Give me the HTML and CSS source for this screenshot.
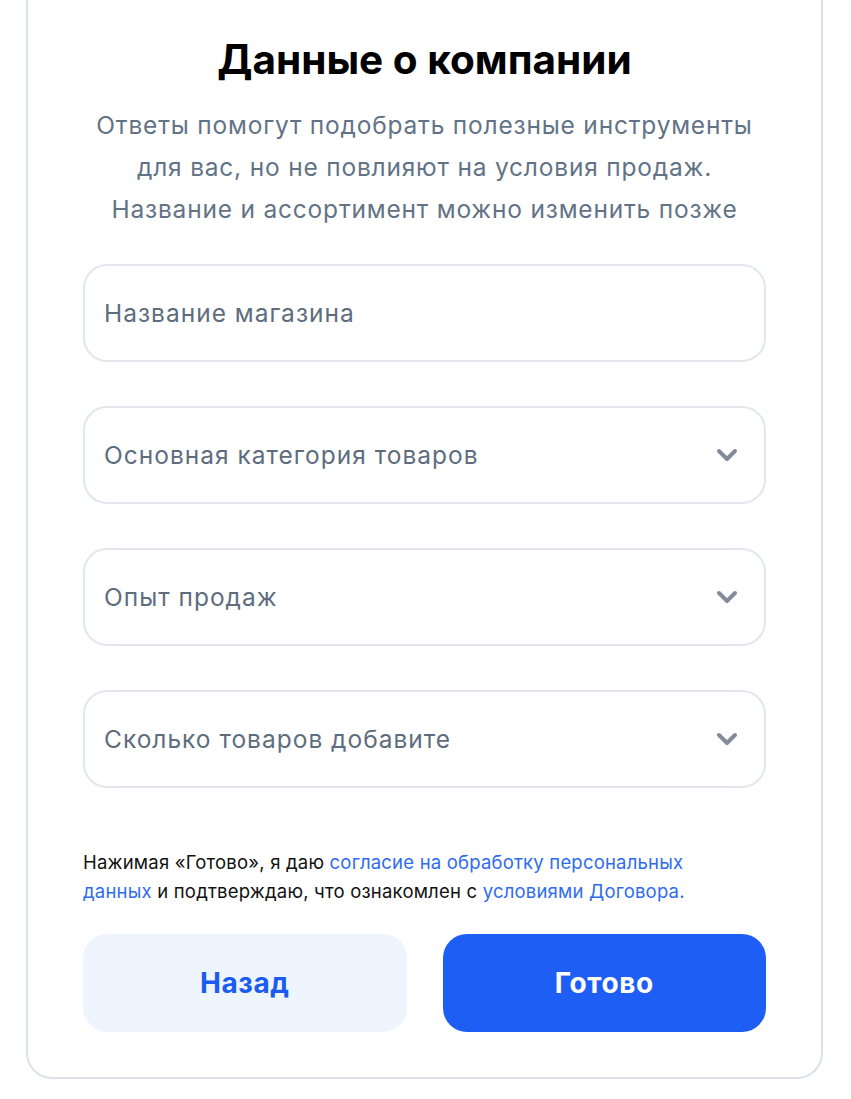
FILE: index.html
```html
<!DOCTYPE html>
<html lang="ru">
<head>
    <meta charset="UTF-8">
    <meta name="viewport" content="width=device-width, initial-scale=1.0">
    <title>Данные о компании</title>
    <link rel="stylesheet" href="styles.css">
</head>
<body>
    <div class="card">
        <h1 class="title">Данные о компании</h1>
        <p class="subtitle">Ответы помогут подобрать полезные инструменты<br>для вас, но не повлияют на условия продаж.<br>Название и ассортимент можно изменить позже</p>

        <div class="fields">
            <div class="field">
                <span class="placeholder">Название магазина</span>
            </div>
            <div class="field">
                <span class="placeholder">Основная категория товаров</span>
                <svg class="chevron" width="22" height="14" viewBox="0 0 22 14"><path d="M3 3l8 8 8-8" fill="none" stroke="#838b9b" stroke-width="4" stroke-linecap="round" stroke-linejoin="round"/></svg>
            </div>
            <div class="field">
                <span class="placeholder">Опыт продаж</span>
                <svg class="chevron" width="22" height="14" viewBox="0 0 22 14"><path d="M3 3l8 8 8-8" fill="none" stroke="#838b9b" stroke-width="4" stroke-linecap="round" stroke-linejoin="round"/></svg>
            </div>
            <div class="field">
                <span class="placeholder">Сколько товаров добавите</span>
                <svg class="chevron" width="22" height="14" viewBox="0 0 22 14"><path d="M3 3l8 8 8-8" fill="none" stroke="#838b9b" stroke-width="4" stroke-linecap="round" stroke-linejoin="round"/></svg>
            </div>
        </div>

        <p class="consent">Нажимая «Готово», я даю <a href="#">согласие на обработку персональных<br>данных</a> и подтверждаю, что ознакомлен с <a href="#">условиями Договора.</a></p>

        <div class="actions">
            <button class="btn btn-back">Назад</button>
            <button class="btn btn-done">Готово</button>
        </div>
    </div>
</body>
</html>
```

FILE: styles.css
```css
body {
    font-family: 'Inter', 'Noto Sans', sans-serif;
    margin: 0;
    background-color: white;
    padding: 0 28px 0 26px;
}
.card {
    border: 2px solid #dde1ea;
    border-top: none;
    border-radius: 0 0 26px 26px;
    padding: 36px 55px 45px;
    background-color: white;
}
.title {
    margin: 0;
    text-align: center;
    font-size: 40.5px;
    font-weight: 700;
    color: #000;
    line-height: 48px;
}
.subtitle {
    margin: 20px 0 0;
    text-align: center;
    font-size: 24.5px;
    letter-spacing: 0.8px;
    line-height: 42px;
    color: #637386;
}
.fields {
    display: flex;
    flex-direction: column;
    gap: 44px;
    margin-top: 34px;
}
.field {
    box-sizing: border-box;
    height: 98px;
    border: 2px solid #e2e6ed;
    border-radius: 24px;
    display: flex;
    align-items: center;
    justify-content: space-between;
    padding: 0 26px 0 19px;
}
.placeholder {
    font-size: 24.5px;
    letter-spacing: 1px;
    color: #5e6d7e;
}
.consent {
    margin: 60px 0 0;
    font-size: 18.5px;
    letter-spacing: 0.2px;
    line-height: 29px;
    color: #111;
}
.consent a {
    color: #2e6bf1;
    text-decoration: none;
}
.actions {
    display: flex;
    gap: 36px;
    margin-top: 28px;
}
.btn {
    flex: 1;
    height: 98px;
    border: none;
    border-radius: 24px;
    font-family: inherit;
    font-size: 28px;
    font-weight: 700;
    letter-spacing: 0.6px;
    cursor: pointer;
}
.btn-back {
    background-color: #eef5fe;
    color: #1a5cf0;
}
.btn-done {
    background-color: #1e5ef5;
    color: white;
}
```
